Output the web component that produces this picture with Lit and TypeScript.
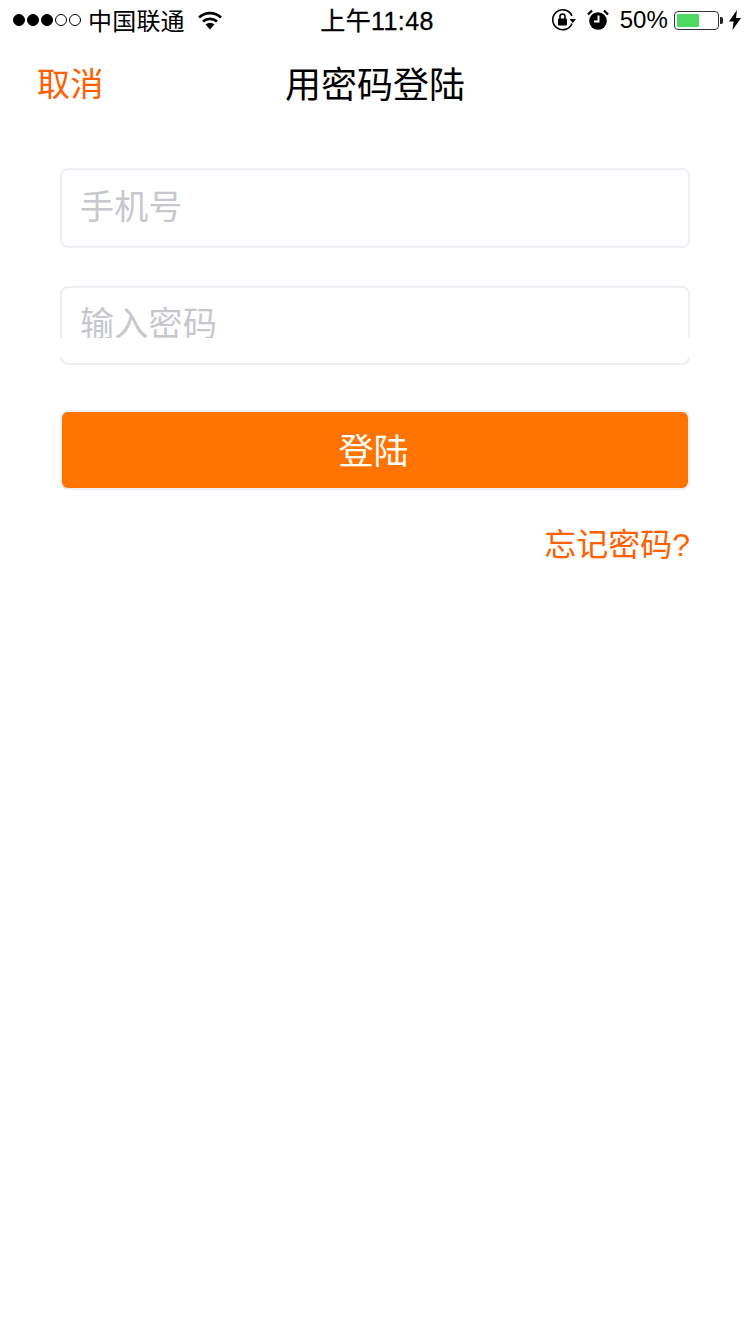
import { css, html, LitElement } from 'lit';
import { customElement } from 'lit/decorators.js';

@customElement('app-root')
export class AppRoot extends LitElement {
  static override styles = css`
    :host {
      display: block;
      width: 750px;
      height: 1334px;
      background: #fff;
      overflow: hidden;
      font-family: 'Liberation Sans', 'Noto Sans CJK SC', sans-serif;
      color: #000;
    }
    .status {
      height: 40px;
      display: grid;
      grid-template-columns: 1fr auto 1fr;
      align-items: center;
      font-size: 25px;
    }
    .status-left {
      display: flex;
      align-items: center;
      padding-left: 13px;
    }
    .dots {
      display: flex;
      gap: 2px;
      margin-right: 7px;
    }
    .dot {
      width: 12px;
      height: 12px;
      box-sizing: border-box;
      border-radius: 50%;
      border: 1.2px solid #000;
    }
    .dot.on {
      background: #000;
    }
    .carrier {
      font-size: 24px;
      letter-spacing: 0.2px;
      margin: 0 12px 2px 0;
    }
    .time {
      font-size: 25px;
      letter-spacing: 0.4px;
      padding: 0 0 2px 4px;
      -webkit-text-stroke: 0.3px #000;
    }
    .status-right {
      display: flex;
      align-items: center;
      justify-content: flex-end;
      padding-right: 9px;
    }
    .alarm {
      margin-left: 10px;
    }
    .percent {
      font-size: 24px;
      letter-spacing: 0.1px;
      margin: 0 6px 0 11px;
    }
    .battery {
      box-sizing: border-box;
      width: 45px;
      height: 19px;
      padding: 2px;
      border: 1.5px solid #333;
      border-radius: 4px;
    }
    .battery-fill {
      width: 22px;
      height: 100%;
      background: #4cd964;
      border-radius: 1px;
    }
    .battery-cap {
      width: 3px;
      height: 7px;
      margin: 0 6px 0 1px;
      background: #222;
      border-radius: 0 2px 2px 0;
    }
    .nav {
      box-sizing: border-box;
      height: 90px;
      display: grid;
      grid-template-columns: 1fr auto 1fr;
      align-items: center;
      padding: 0 36px 6px;
    }
    .cancel {
      font-size: 33px;
      padding-left: 1px;
      letter-spacing: 0.5px;
    }
    .cancel,
    .forgot {
      color: #ff6000;
    }
    .title {
      font-size: 36px;
    }
    .form {
      display: flex;
      flex-direction: column;
      padding: 38px 60px 0;
    }
    .field {
      box-sizing: border-box;
      height: 80px;
      padding: 0 18px 8px;
      display: flex;
      align-items: center;
      border: 2px solid #eeeef5;
      border-radius: 8px;
      font-size: 34px;
      letter-spacing: 0.3px;
      color: #c7c7cd;
    }
    .field + .field {
      margin-top: 38px;
      height: 79px;
    }
    .password {
      position: relative;
    }
    /* white strip that cuts across the lower part of the password field */
    .strip {
      position: absolute;
      left: -4px;
      right: -4px;
      top: 50px;
      height: 19px;
      background: #fff;
    }
    .login {
      box-sizing: border-box;
      height: 80px;
      margin-top: 45px;
      padding: 0 3px 4px 0;
      display: flex;
      align-items: center;
      justify-content: center;
      background: #ff7300;
      border: 2px solid #eeeef5;
      border-radius: 8px;
      color: #fff;
      font-size: 35px;
    }
    .forgot {
      align-self: flex-end;
      margin-top: 30px;
      font-size: 32px;
      line-height: 50px;
    }
    svg {
      display: block;
    }
  `;

  override render() {
    return html`
      <div class="status">
        <div class="status-left">
          <div class="dots">
            <span class="dot on"></span><span class="dot on"></span><span class="dot on"></span>
            <span class="dot"></span><span class="dot"></span>
          </div>
          <span class="carrier">中国联通</span>
          <svg width="26" height="20" viewBox="0 0 26 20">
            <path d="M2 7.5a16 16 0 0 1 22 0" fill="none" stroke="#000" stroke-width="2.6" />
            <path d="M6 11.5a10.5 10.5 0 0 1 14 0" fill="none" stroke="#000" stroke-width="2.6" />
            <path d="M8.6 14.6a6 6 0 0 1 8.8 0L13 19.5z" fill="#000" />
          </svg>
        </div>
        <div class="time">上午11:48</div>
        <div class="status-right">
          <svg width="26" height="24" viewBox="0 0 26 24">
            <path d="M21 15.5A10 10 0 1 1 21 8" fill="none" stroke="#000" stroke-width="1.6" />
            <path d="M18.5 11h6.5l-3.2 4z" fill="#000" />
            <rect x="7" y="10.5" width="9" height="7" rx="1" fill="#000" />
            <path d="M9 11V8.5a2.5 2.5 0 0 1 5 0V11" fill="none" stroke="#000" stroke-width="1.6" />
          </svg>
          <svg class="alarm" width="22" height="22" viewBox="0 0 22 22">
            <circle cx="11" cy="12" r="8.8" fill="#000" />
            <path d="M11.5 6.5v6H7" fill="none" stroke="#fff" stroke-width="2" />
            <path d="M1 5.5L5 1.5M21 5.5L17 1.5" stroke="#000" stroke-width="2.4" />
          </svg>
          <span class="percent">50%</span>
          <div class="battery"><div class="battery-fill"></div></div>
          <div class="battery-cap"></div>
          <svg width="12" height="20" viewBox="0 0 12 20">
            <path d="M8 0L0 11.5h4.6L3.5 20 12 8H7z" fill="#000" />
          </svg>
        </div>
      </div>
      <div class="nav">
        <div class="cancel">取消</div>
        <div class="title">用密码登陆</div>
      </div>
      <div class="form">
        <div class="field">手机号</div>
        <div class="field password">输入密码<div class="strip"></div></div>
        <div class="login">登陆</div>
        <div class="forgot">忘记密码?</div>
      </div>
    `;
  }
}
